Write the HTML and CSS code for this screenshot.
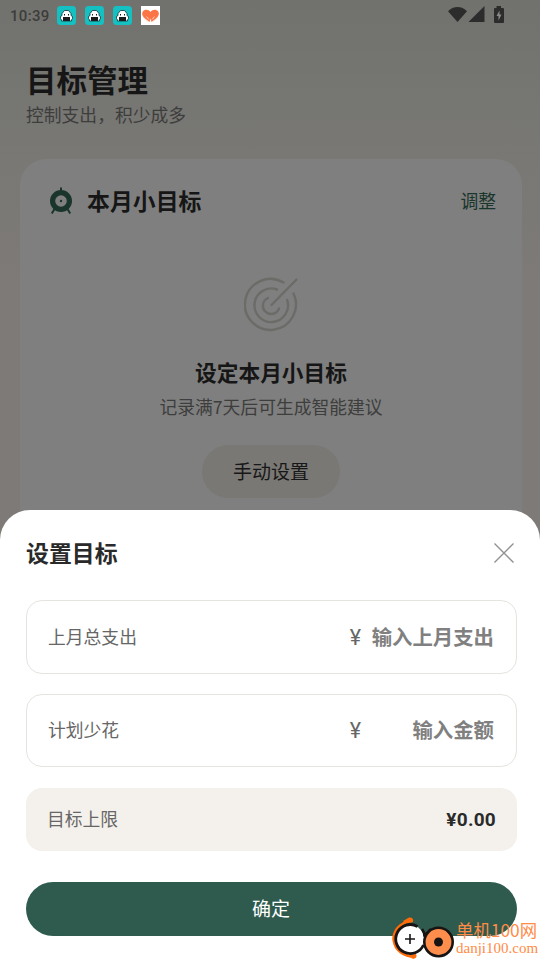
FILE: index.html
```html
<!DOCTYPE html>
<html lang="zh-CN">
<head>
<meta charset="utf-8">
<title>目标管理</title>
<link rel="stylesheet" href="styles.css">
</head>
<body>
<main class="screen">
  <div class="status">
    <span class="time">10:39</span>
    <svg width="0" height="0" class="defs"><defs><g id="ghost"><rect width="19" height="19" rx="3.500" fill="#15c0c2"/><path d="M4.500 14L3.500 12.500V10.500L5 9.500V7.500L7.500 4.500H11.500L14 7.500V9.500L15.500 10.500V12.500L14.500 14V15H4.500Z" fill="#fff" stroke="#174445" stroke-width=".9"/><path d="M6 11H13V15H6Z" fill="#171b1b"/><path d="M7 8h1v1.500H7zM11 8h1v1.500h-1z" fill="#171b1b"/></g></defs></svg>
    <svg class="app" viewBox="0 0 19 19"><use href="#ghost"/></svg>
    <svg class="app" viewBox="0 0 19 19"><use href="#ghost"/></svg>
    <svg class="app" viewBox="0 0 19 19"><use href="#ghost"/></svg>
    <svg class="app" viewBox="0 0 19 19"><rect width="19" height="19" fill="#fff"/><path d="M9.500 6C7.500 3 3.500 3 1.800 5.500C.2 8 2 11 4 12.500L8.500 16L9.500 12.500L10.500 16L15 12.500C17 11 18.800 8 17.200 5.500C15.500 3 11.500 3 9.500 6Z" fill="#fb7547"/><path d="M2.500 12L7.500 15.800M16.500 12L11.500 15.800M5.500 10.500L8 13.500M13.500 10.500L11 13.500" stroke="#ffd5c5" stroke-width=".9" fill="none"/></svg>
    <svg class="system" viewBox="0 0 58 20"><path d="M0 5.300C5-.4 14-.4 19 5.300L9.500 16Z"/><path d="M20.500 16L36.500 0V16Z"/><path d="M48.500 0H53V2H55Q56 2 56 3V16Q56 17 55 17H47Q46 17 46 16V3Q46 2 47 2H48.500Z"/><path d="M51.500 4.500L48.500 10H50.500V14.500L53.500 8.500H51.500Z" fill="#8b8c89"/></svg>
  </div>
  <header class="heading">
    <h1>目标管理</h1>
    <p>控制支出，积少成多</p>
  </header>
  <section class="card">
    <div class="card-head">
      <svg class="target" viewBox="0 0 24 28"><circle cx="12" cy="14" r="8.400" fill="none" stroke="#1a352c" stroke-width="5.200"/><circle cx="12" cy="14" r="1.200" fill="#1a352c"/><path d="M12 .5V5M5.500 22L2.800 26.500M18.500 22L21.200 26.500" stroke="#1a352c" stroke-width="2"/></svg>
      <h2>本月小目标</h2>
      <span class="adjust">调整</span>
    </div>
    <svg class="goal" viewBox="0 0 56 56"><g fill="none" stroke="#6b6b68" stroke-width="2.400" stroke-linecap="round"><path d="M39.500 5.500A25.500 25.500 0 1 0 49.500 16.500"/><path d="M33 12.500A16.800 16.800 0 1 0 43.200 23"/><path d="M24 21A8.300 8.300 0 1 0 35 31.500M27.500 28L52.500 2.500"/></g></svg>
    <h3>设定本月小目标</h3>
    <p class="hint">记录满7天后可生成智能建议</p>
    <button class="manual">手动设置</button>
  </section>
  <section class="sheet">
    <div class="sheet-head">
      <h2>设置目标</h2>
      <svg class="close" viewBox="0 0 20 20"><path d="M.5 .5L19.500 19.500M19.500 .5L.5 19.500" stroke="#929292" stroke-width="1.400"/></svg>
    </div>
    <div class="field"><span class="label">上月总支出</span><span class="yen">¥</span><span class="entry">输入上月支出</span></div>
    <div class="field"><span class="label">计划少花</span><span class="yen">¥</span><span class="entry">输入金额</span></div>
    <div class="limit"><span class="label">目标上限</span><strong>¥0.00</strong></div>
    <button class="confirm">确定</button>
  </section>
  <div class="watermark">
    <svg viewBox="0 0 64 44"><path d="M22 3.500C9 5 1 15 2.500 25C4 35 13 42 25 42C16 38 7 33 6 24C5 14 12 7 23 6Z" fill="#ff6b08"/><path d="M13 5L19 1.500Q24 1 23 6L15 7ZM18 39L26 38Q28 42 23 43Z" fill="#ff6b08"/><circle cx="20" cy="23" r="14" fill="#fff"/><path d="M27.500 10.500A14.500 14.500 0 1 0 33.500 29" fill="none" stroke="#191414" stroke-width="2.800"/><path d="M15 23H25M20 18V28" stroke="#191414" stroke-width="1.600"/><path d="M32 13Q35 17 34.500 21M35 19L41 13" fill="none" stroke="#191414" stroke-width="2.500"/><circle cx="48.500" cy="26" r="14.200" fill="#ff8d4b" stroke="#191414" stroke-width="2.600"/><circle cx="48.500" cy="26" r="4.500" fill="#191414"/></svg>
    <div class="brand"><span class="brand-name">单机100网</span><span class="brand-url">danji100.com</span></div>
  </div>
</main>
</body>
</html>
```

FILE: styles.css
```css
* { box-sizing: border-box; }
body { margin: 0; font-family: Roboto, "Noto Sans CJK SC", sans-serif; }
h1, h2, h3, p { margin: 0; font-family: "Noto Sans CJK SC", sans-serif; }
h1, h2, h3 { font-weight: 700; white-space: nowrap; }
button { border: 0; padding: 0; font-family: "Noto Sans CJK SC", sans-serif; }
svg { display: block; flex: none; }
.screen { position: relative; width: 540px; height: 960px; overflow: hidden; background: linear-gradient(#71726e 0, #797875 160px, #7d7a77 280px, #7d7a77 100%); }
.defs { position: absolute; }
.status { height: 32px; padding: 0 34px 2px 10px; display: flex; align-items: center; gap: 9px; }
.time { width: 38px; font-size: 15px; font-weight: 500; letter-spacing: .3px; color: #3d3d3b; white-space: nowrap; padding-top: 1px; }
.app { width: 19px; height: 19px; }
.system { width: 58px; height: 20px; margin-left: auto; margin-top: 2px; fill: #2c2c2c; }
.heading { padding: 28px 26px 0; height: 127px; }
.heading h1 { font-size: 30.500px; line-height: 39px; color: #161616; }
.heading p { font-size: 17.800px; line-height: 30px; color: #3d3d3c; }
.card { margin: 0 18px 0 20px; height: 450px; border-radius: 26px; background: #7f7f7f; display: flex; flex-direction: column; align-items: center; }
.card-head { width: 100%; height: 84px; padding: 0 26px 0 29px; display: flex; align-items: center; }
.target { width: 24px; height: 28px; margin-right: 14px; }
.card-head h2 { padding-bottom: 2px; font-size: 22.900px; color: #161616; }
.adjust { margin-left: auto; padding-bottom: 2px; font-size: 17.800px; color: #1a352c; }
.goal { width: 56px; height: 56px; margin: 34px 0 0 2px; }
.card h3 { margin-top: 23px; font-size: 21.700px; line-height: 32px; color: #161616; }
.hint { margin-top: 5px; font-size: 17.800px; line-height: 26px; color: #3d3d3c; white-space: nowrap; }
.manual { width: 138px; height: 53px; margin-top: 26px; padding-bottom: 2px; border-radius: 27px; background: #7a7874; font-size: 19px; color: #171717; flex: none; }
.sheet { position: absolute; left: 0; right: 0; bottom: 0; height: 450px; padding: 0 23px 0 26px; background: #fff; border-radius: 30px 30px 0 0; }
.sheet-head { height: 90px; padding: 0 3px 4px 0; display: flex; align-items: center; justify-content: space-between; }
.sheet-head h2 { padding-bottom: 2px; font-size: 22.900px; color: #2a2a2a; }
.close { width: 20px; height: 20px; }
.field { height: 74px; margin-bottom: 20px; padding: 0 22px 0 21px; border: 1px solid #e6e4df; border-radius: 16px; display: flex; align-items: center; }
.field + .field { height: 73px; margin-bottom: 21px; }
.label { padding-bottom: 2px; font-size: 17.800px; color: #666; }
.field + .field .label { padding-bottom: 3px; }
.yen { margin-left: auto; font-size: 21.500px; color: #666; }
.entry { width: 133px; padding-bottom: 2px; text-align: right; font-size: 20.400px; font-weight: 700; color: #808080; white-space: nowrap; }
.field + .field .entry { padding-bottom: 3px; }
.limit { height: 63px; padding: 0 21px 2px; border-radius: 16px; background: #f4f1ec; display: flex; align-items: center; justify-content: space-between; }
.limit strong { padding-top: 2px; font-size: 19px; font-weight: 700; letter-spacing: .25px; color: #2a2a2a; }
.confirm { display: block; width: 491px; height: 54px; margin-top: 31px; padding: 0 1px 4px 0; border-radius: 27px; background: #2e5b4d; color: #fff; font-size: 19px; }
.watermark { position: absolute; right: 1px; bottom: 1px; width: 149px; height: 43px; display: flex; gap: 2px; }
.watermark svg { width: 64px; height: 44px; }
.brand { display: flex; flex-direction: column; padding-top: 4px; white-space: nowrap; color: #ff8b47; }
.brand-name { font: 17.400px/20px "Noto Sans CJK SC", sans-serif; }
.brand-url { font: 15px/17px "Liberation Serif", serif; }
```
